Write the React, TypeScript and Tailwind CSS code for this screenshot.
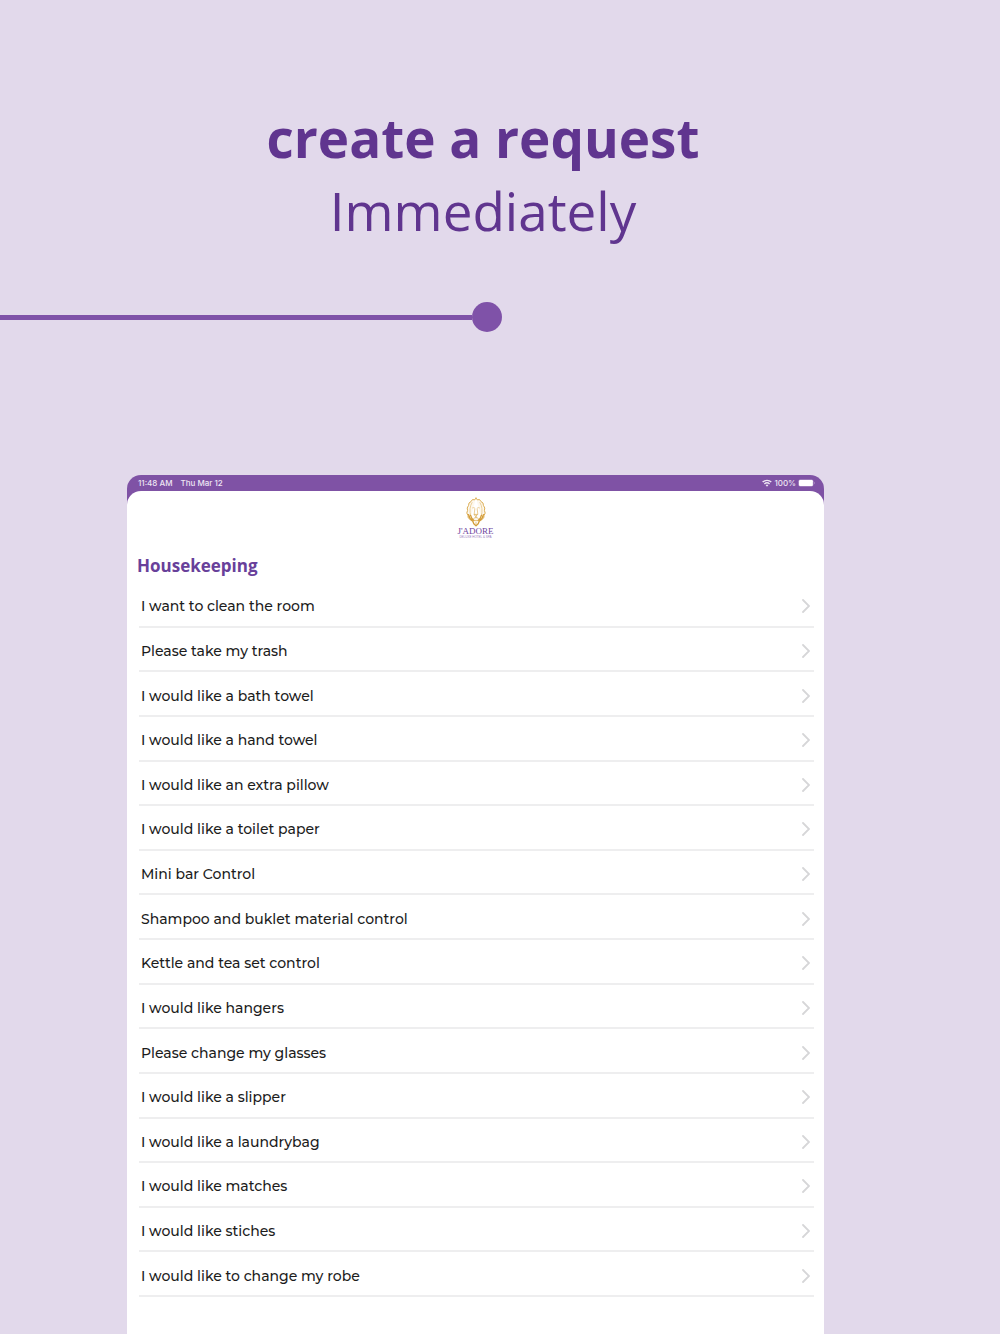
const REQUESTS = [
  'I want to clean the room',
  'Please take my trash',
  'I would like a bath towel',
  'I would like a hand towel',
  'I would like an extra pillow',
  'I would like a toilet paper',
  'Mini bar Control',
  'Shampoo and buklet material control',
  'Kettle and tea set control',
  'I would like hangers',
  'Please change my glasses',
  'I would like a slipper',
  'I would like a laundrybag',
  'I would like matches',
  'I would like stiches',
  'I would like to change my robe',
]

export default function App() {
  return (
    <div className="flex min-h-screen flex-col bg-[#e2d9eb] font-['Open_Sans',sans-serif]">
      <header className="pt-[101px] pr-[34px] text-center text-[53px] leading-[73px] text-[#60358f]">
        <h1>
          <span className="block font-bold">create a request</span>
          <span className="block">Immediately</span>
        </h1>
      </header>
      <Timeline />
      <main className="mr-[176px] ml-[127px] flex flex-1 flex-col rounded-t-[14px] bg-[#7f52a5]">
        <StatusBar />
        <div className="flex-1 rounded-t-[14px] bg-white pt-[6px] pb-[36px]">
          <Logo />
          <h2 className="mt-[14px] mb-[4px] px-[10px] text-[17px] leading-[26px] font-bold text-[#68409a]">Housekeeping</h2>
          <RequestList />
        </div>
      </main>
    </div>
  )
}

function Timeline() {
  return (
    <div className="mt-[55px] mb-[143px] flex w-1/2 items-center" aria-hidden>
      <span className="h-[5px] flex-1 bg-[#7f52a8]" />
      <span className="mr-[-2px] size-[30px] rounded-full bg-[#7f52a8]" />
    </div>
  )
}

function StatusBar() {
  return (
    <div className="flex h-[16px] items-center justify-between pr-[9px] pl-[11px] font-['Inter',sans-serif] text-[8px] leading-[16px] font-medium text-[#eee6f4]">
      <div className="flex gap-[8px]">
        <span>11:48 AM</span>
        <span>Thu Mar 12</span>
      </div>
      <div className="flex items-center gap-[2px]">
        <WifiIcon />
        <span>100%</span>
        <BatteryIcon />
      </div>
    </div>
  )
}

function RequestList() {
  return (
    <ul className="mr-[10px] ml-[12px] grid min-h-[714px] auto-rows-fr">
      {REQUESTS.map((request) => (
        <li key={request} className="flex border-b-2 border-[#eeeeef]">
          <button
            type="button"
            className="flex flex-1 items-center justify-between pt-[4px] pr-[4px] pl-[2px] text-left font-['Montserrat','Inter',sans-serif] text-[14px] leading-[20px] font-medium text-[#1c1c1c]"
          >
            {request}
            <Chevron />
          </button>
        </li>
      ))}
    </ul>
  )
}

function Chevron() {
  return (
    <svg viewBox="0 0 8 14" className="h-[14px] w-[8px]" fill="none" stroke="#d6d6d8" strokeWidth="1.8" strokeLinecap="round" aria-hidden>
      <path d="m1 1 6 6-6 6" />
    </svg>
  )
}

function Logo() {
  return (
    <div className="flex flex-col items-center">
      <svg viewBox="0 0 20 30" className="h-[30px] w-[20px]" fill="none" stroke="#dcae55" strokeLinecap="round" strokeLinejoin="round" aria-hidden>
        {/* mane */}
        <path d="M10 1 8.8 2.8 6.4 2.6 5 4.6 3 6 2.6 8.4 1.2 11 1.6 13.4.8 16 2 18.6 2.2 20.8 4.2 22.6M10 1l1.2 1.8 2.4-.2L15 4.6 17 6l.4 2.4L18.8 11l-.4 2.4.8 2.6-1.2 2.6-.2 2.2-2 1.8" fill="#fdf8ee" strokeWidth="1" />
        <path d="M6 5.6C3.8 9 3.4 14 4.6 18.6M14 5.6c2.2 3.4 2.6 8.4 1.4 13" stroke="#ecd09a" strokeWidth="1" />
        <path d="M2.6 17.6c.6 3.4 2.4 5.4 4.2 6.6l1 2.6 2.2 2 2.2-2 1-2.6c1.8-1.2 3.6-3.2 4.2-6.6M4.6 18.4c.6 2.6 1.8 4 3.4 5.2M15.4 18.4c-.6 2.6-1.8 4-3.4 5.2" stroke="#d39c38" strokeWidth="1.3" />
        {/* face */}
        <path d="M6.6 10.8c.8-.4 1.6-.2 2.2.4M13.4 10.8c-.8-.4-1.6-.2-2.2.4M8.8 12l-.6 5M11.2 12l.6 5" stroke="#e6c27c" strokeWidth=".8" />
        <path d="M8.4 17.4h3.2L10 19.2ZM10 19v1.4M7.6 21.6c1.4-1.4 3.4-1.4 4.8 0M8.6 23.4h2.8M10 25v2" strokeWidth=".8" />
      </svg>
      <span className="font-['Liberation_Serif',serif] text-[9px] leading-[9px] text-[#6f45a0]">J'ADORE</span>
      <span className="font-['Liberation_Sans',sans-serif] text-[3px] leading-[3px] text-[#9a7bbd]">DELUXE HOTEL &amp; SPA</span>
    </div>
  )
}

function WifiIcon() {
  return (
    <svg viewBox="0 0 10 8" className="h-[8px] w-[10px]" fill="none" stroke="currentColor" strokeWidth="1.4" aria-hidden>
      <path d="M.7 3.1a6.2 6.2 0 0 1 8.6 0M2.4 4.9a3.8 3.8 0 0 1 5.2 0" />
      <path d="M3.7 6.2a1.9 1.9 0 0 1 2.6 0L5 7.7Z" fill="currentColor" stroke="none" />
    </svg>
  )
}

function BatteryIcon() {
  return (
    <svg viewBox="0 0 17 8" className="h-[8px] w-[17px]" aria-hidden>
      <rect x=".4" y=".4" width="15" height="7.2" rx="1.8" fill="#b79bcc" />
      <rect x="1" y="1" width="13.8" height="6" rx="1.2" fill="#fff" />
      <path d="M16 2.8c.9.4.9 2 0 2.4Z" fill="#b79bcc" />
    </svg>
  )
}
